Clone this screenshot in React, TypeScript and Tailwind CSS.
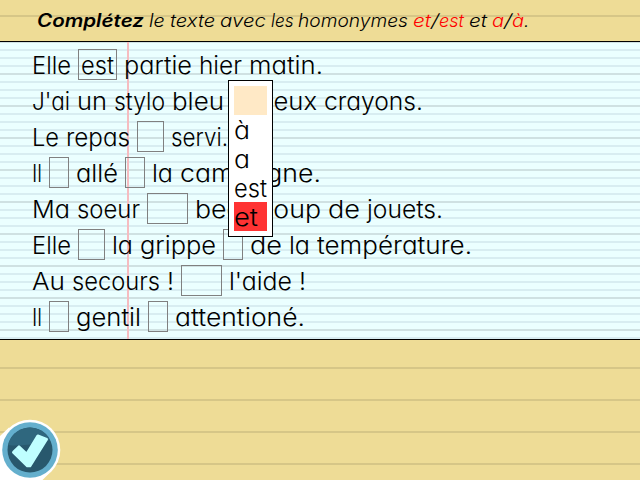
import { useLayoutEffect, useRef, useState } from 'react';

// Advance widths in pixels of a geometric sans at 24px.
const ADVANCE: Record<string, number> = {
  a: 16, à: 16, b: 16, c: 16, d: 16, e: 16, é: 16, f: 8, g: 16, h: 15, i: 5, j: 5,
  l: 5, m: 23, n: 15, o: 16, p: 16, r: 7, s: 9, t: 8, u: 15, v: 13, x: 12, y: 13,
  z: 10, E: 13, J: 12, M: 22, L: 11, A: 18, I: 5, '.': 7, '!': 7, "'": 5, '/': 10.5,
};

function advance(text: string, size: number) {
  return ([...text].reduce((sum, ch) => sum + (ADVANCE[ch] ?? 14), 0) * size) / 24;
}

function Word({ text, size, width, className = '' }: { text: string; size: number; width?: number; className?: string }) {
  const ref = useRef<HTMLSpanElement>(null);
  const [scale, setScale] = useState(1);
  const target = width ?? advance(text, size);
  useLayoutEffect(() => {
    const el = ref.current;
    if (!el) return;
    el.style.transform = 'none';
    const natural = el.getBoundingClientRect().width;
    el.style.transform = `scaleX(${target / natural})`;
    setScale(target / natural);
  }, [target]);
  return (
    <span className={`inline-block shrink-0 whitespace-nowrap ${className}`} style={{ width: target }}>
      <span ref={ref} className="inline-block origin-left" style={{ transform: `scaleX(${scale})` }}>
        {text}
      </span>
    </span>
  );
}

function Words({ text }: { text: string }) {
  return (
    <span className="flex gap-[7px]">
      {text.split(' ').map((word, i) => (
        <Word key={i} text={word} size={24} />
      ))}
    </span>
  );
}

type Part = string | { blank: number; value?: string };

const LINES: Part[][] = [
  ['Elle', { blank: 39, value: 'est' }, 'partie hier matin.'],
  ["J'ai un stylo bleu", { blank: 20 }, 'deux crayons.'],
  ['Le repas', { blank: 27 }, 'servi.'],
  ['Il', { blank: 20 }, 'allé', { blank: 20 }, 'la campagne.'],
  ['Ma soeur', { blank: 41 }, 'beaucoup de jouets.'],
  ['Elle', { blank: 27 }, 'la grippe', { blank: 20 }, 'de la température.'],
  ['Au secours !', { blank: 41 }, "l'aide !"],
  ['Il', { blank: 20 }, 'gentil', { blank: 20 }, 'attentioné.'],
];

const TITLE: [string, boolean][][] = [
  [['le', false]],
  [['texte', false]],
  [['avec', false]],
  [['les', false]],
  [['homonymes', false]],
  [['et', true], ['/', false], ['est', true]],
  [['et', false]],
  [['a', true], ['/', false], ['à', true], ['.', false]],
];

function Menu() {
  return (
    <div className="absolute left-[228px] top-[80px] w-[45px] border border-black bg-white p-[5px] text-[24px] leading-[31px]">
      <div className="h-[29px] bg-[#ffe9c6]" />
      {['à', 'a', 'est', 'et'].map((option) => (
        <div key={option} className={`flex h-[29px] ${option === 'et' ? 'bg-[#ff3333]' : ''}`}>
          <Word text={option} size={24} />
        </div>
      ))}
    </div>
  );
}

export default function App() {
  return (
    <div className="relative flex h-[480px] w-[640px] flex-col overflow-hidden bg-[#eedc96] bg-[repeating-linear-gradient(to_bottom,transparent_0px,transparent_15px,#d6c687_15px,#d6c687_17px,transparent_17px,transparent_32px)] font-['Inter','Liberation_Sans',sans-serif] font-light text-black [font-feature-settings:'cv11'_1,'calt'_0]">
      <header className="flex h-[41px] gap-[4.9px] pl-[37px] pt-[5px] text-[18px] italic leading-[32px]">
        <Word text="Complétez" size={18.25} width={107} className="font-semibold" />
        {TITLE.map((group, i) => (
          <span key={i} className="flex">
            {group.map(([text, red], j) => (
              <Word key={j} text={text} size={18.08} className={red ? 'text-[#ff0000]' : ''} />
            ))}
          </span>
        ))}
      </header>
      <main className="h-[299px] border-y border-black bg-[#ebffff] bg-[linear-gradient(to_right,transparent_127px,#f6bcc0_127px,#f6bcc0_129px,transparent_129px),repeating-linear-gradient(to_bottom,#cfe1e2_0px,#cfe1e2_1px,transparent_1px,transparent_31px,#cfe1e2_31px,#cfe1e2_32px),repeating-linear-gradient(to_bottom,#d8edf1_0px,#d8edf1_1px,transparent_1px,transparent_7px,#d8edf1_7px,#d8edf1_8px)] pl-[32px] pt-[5px] text-[24px]">
        {LINES.map((line, i) => (
          <div key={i} className="flex h-[36px] items-start gap-[7px] leading-[38px]">
            {line.map((part, j) =>
              typeof part === 'string' ? (
                <Words key={j} text={part} />
              ) : (
                <span key={j} className="mt-[2px] flex h-[31px] shrink-0 border border-[#808080] pl-[2px] leading-[32px]" style={{ width: part.blank }}>
                  {part.value && <Word text={part.value} size={24} />}
                </span>
              ),
            )}
          </div>
        ))}
      </main>
      <Menu />
      <svg className="absolute left-0 top-[418px]" width="62" height="62" viewBox="0 418 62 62">
        <path d="M0 436 L9 427.5 L30 450 L51 471.5 L42.5 480 H0Z" fill="#fff" />
        <circle cx="30" cy="450" r="30.3" fill="#fff" />
        <circle cx="30" cy="450" r="27.8" fill="#64afcd" />
        <circle cx="30" cy="450" r="22.5" fill="#28586d" />
        <path d="M8 445 A22.5 22.5 0 0 1 50 440 C38 443 22 447 8 445Z" fill="#2f677e" />
        <path d="M13.3 452.3 L19 446.7 L26.7 454 L37.8 435.8 L46.7 439.3 L30 466 H27.3Z" fill="#bfffff" stroke="#bfffff" strokeWidth="2.6" strokeLinejoin="round" />
      </svg>
    </div>
  );
}
